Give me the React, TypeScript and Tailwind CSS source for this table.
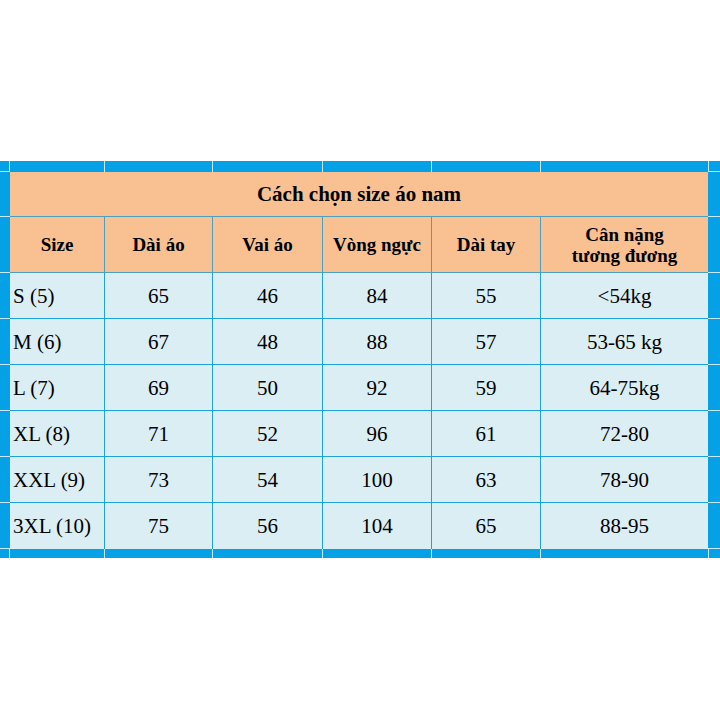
import React from "react";

const headers = ["Size", "Dài áo", "Vai áo", "Vòng ngực", "Dài tay"];
const rows = [
  ["S (5)", "65", "46", "84", "55", "<54kg"],
  ["M (6)", "67", "48", "88", "57", "53-65 kg"],
  ["L (7)", "69", "50", "92", "59", "64-75kg"],
  ["XL (8)", "71", "52", "96", "61", "72-80"],
  ["XXL (9)", "73", "54", "100", "63", "78-90"],
  ["3XL (10)", "75", "56", "104", "65", "88-95"],
];

export default function App() {
  return (
    <div className="w-[720px] h-[720px] bg-white pt-[161px] font-['Liberation_Serif','DejaVu_Serif',serif]">
      <div className="grid grid-cols-[10px_95px_108px_110px_109px_109px_167px_12px] grid-rows-[11px_45px_56px_46px_46px_46px_46px_46px_46px_9px] bg-[#04a1e6] text-black">
        {/* top band */}
        <div className="border-r border-b border-[#c6eafa]" />
        {[0, 1, 2, 3, 4, 5].map((i) => (
          <div key={"t" + i} className={i < 5 ? "border-r border-[#c6eafa]" : ""} />
        ))}
        <div className="border-l border-b border-[#c6eafa]" />

        {/* title */}
        <div className="border-b border-[#c6eafa]" />
        <div className="col-span-6 bg-[#f9c192] border-b border-[#4d9fbd] flex items-center justify-center font-bold text-[21px] pt-[2px]">
          Cách chọn size áo nam
        </div>
        <div className="border-b border-[#c6eafa]" />

        {/* header */}
        <div className="border-b border-[#c6eafa]" />
        {headers.map((h) => (
          <div key={h} className="bg-[#f9c192] border-r border-b border-[#4d9fbd] flex items-center justify-center font-bold text-[19px] pt-[2px]">
            {h}
          </div>
        ))}
        <div className="bg-[#f9c192] border-b border-[#4d9fbd] flex flex-col items-center justify-center font-bold text-[19px] leading-[21px] pt-[1px]">
          <span>Cân nặng</span>
          <span>tương đương</span>
        </div>
        <div className="border-b border-[#c6eafa]" />

        {/* body */}
        {rows.map((r, ri) => (
          <React.Fragment key={ri}>
            <div className="border-b border-[#c6eafa]" />
            {r.map((c, ci) => (
              <div
                key={ci}
                className={
                  "bg-[#dbeef4] border-[#1ea2dc] flex items-center text-[21px] pt-[2px] " +
                  (ci === 0 ? "justify-start pl-[3px] " : "justify-center ") +
                  (ci < 5 ? "border-r " : "") +
                  (ri < 5 ? "border-b" : "")
                }
              >
                {c}
              </div>
            ))}
            <div className="border-b border-[#c6eafa]" />
          </React.Fragment>
        ))}

        {/* bottom band */}
        <div className="border-r border-[#c6eafa]" />
        {[0, 1, 2, 3, 4, 5].map((i) => (
          <div key={"b" + i} className={i < 5 ? "border-r border-[#c6eafa]" : ""} />
        ))}
        <div className="border-l border-[#c6eafa]" />
      </div>
    </div>
  );
}
